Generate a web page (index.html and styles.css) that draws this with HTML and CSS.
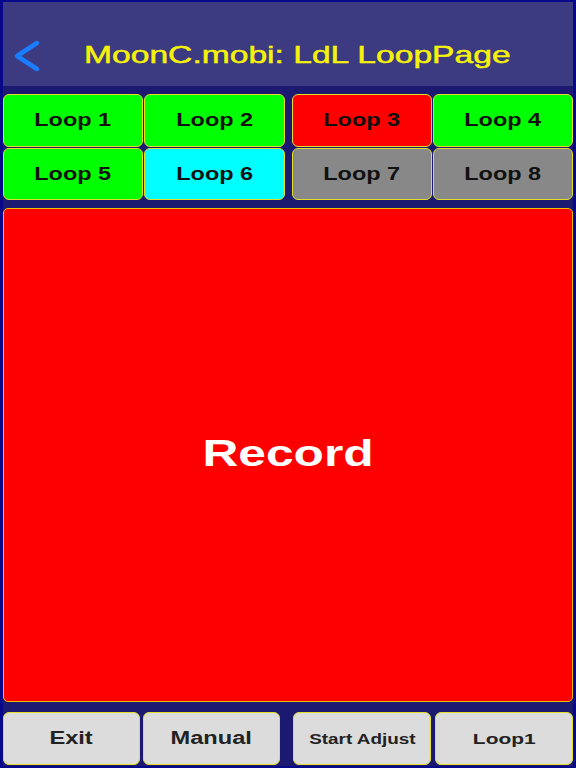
FILE: index.html
```html
<!DOCTYPE html>
<html>
<head>
<meta charset="utf-8">
<link rel="stylesheet" href="styles.css">
</head>
<body>
<div class="app">
  <header class="header">
    <div class="back">
      <svg width="30" height="34" viewBox="0 0 30 34"><path d="M24 4 L4 17 L24 30" fill="none" stroke="#1a7dff" stroke-width="4.5" stroke-linecap="round" stroke-linejoin="round"/></svg>
    </div>
    <div class="title"><span class="stretch">MoonC.mobi: LdL LoopPage</span></div>
  </header>
  <div class="loops">
    <div class="group">
      <div class="btn green"><span class="stretch">Loop 1</span></div>
      <div class="btn green"><span class="stretch">Loop 2</span></div>
      <div class="btn green"><span class="stretch">Loop 5</span></div>
      <div class="btn cyan"><span class="stretch">Loop 6</span></div>
    </div>
    <div class="group">
      <div class="btn red"><span class="stretch">Loop 3</span></div>
      <div class="btn green"><span class="stretch">Loop 4</span></div>
      <div class="btn gray"><span class="stretch">Loop 7</span></div>
      <div class="btn gray"><span class="stretch">Loop 8</span></div>
    </div>
  </div>
  <div class="record"><span class="stretch rec">Record</span></div>
  <div class="bottom">
    <div class="bgroup left">
      <div class="bbtn"><span class="stretch">Exit</span></div>
      <div class="bbtn"><span class="stretch">Manual</span></div>
    </div>
    <div class="bgroup right">
      <div class="bbtn small"><span class="stretch">Start Adjust</span></div>
      <div class="bbtn mid"><span class="stretch">Loop1</span></div>
    </div>
  </div>
</div>
</body>
</html>
```
FILE: styles.css
```css
html, body {
  margin: 0;
  padding: 0;
}
body {
  width: 576px;
  height: 768px;
  background: #08088a;
  font-family: "Liberation Sans", Arial, sans-serif;
  overflow: hidden;
}
.app {
  margin: 2px 3px;
  height: 764px;
  background: #1c1a70;
  display: flex;
  flex-direction: column;
}
.header {
  height: 84px;
  box-sizing: border-box;
  padding-top: 18px;
  background: #3c3a80;
  display: flex;
  align-items: center;
}
.back {
  width: 52px;
  padding-left: 10px;
  box-sizing: border-box;
  display: flex;
  align-items: center;
  margin-top: 5px;
}
.back svg {
  display: block;
}
.title {
  flex: 1;
  text-align: center;
  padding-right: 33px;
  color: #f6f20a;
  font-size: 24px;
  -webkit-text-stroke: 0.5px #f6f20a;
  margin-top: 4px;
}
.stretch {
  display: inline-block;
  transform: scaleX(1.33);
  white-space: nowrap;
}
.title .stretch {
  transform: scaleX(1.4);
}
.loops {
  margin-top: 8px;
  display: flex;
  gap: 7px;
}
.group {
  flex: 1;
  display: grid;
  grid-template-columns: 1fr 1fr;
  grid-template-rows: 53px 52px;
  gap: 1px;
}
.btn {
  border: 1.5px solid #e2de2a;
  border-radius: 6px;
  display: flex;
  align-items: center;
  justify-content: center;
  font-weight: bold;
  font-size: 17.5px;
  color: #111;
}
.btn .stretch {
  transform: scaleX(1.34);
}
.green { background: #00ff00; }
.red { background: #ff0000; }
.cyan { background: #00ffff; }
.gray { background: #888888; }
.record {
  margin-top: 8px;
  flex: 1;
  background: #ff0000;
  border: 1px solid #f0c000;
  border-radius: 5px;
  display: flex;
  align-items: center;
  justify-content: center;
}
.rec {
  color: #ffffff;
  font-weight: bold;
  font-size: 36px;
  transform: scaleX(1.38);
  margin-top: -2px;
}
.bottom {
  margin-top: 10px;
  margin-bottom: 1px;
  height: 53px;
  display: flex;
  gap: 13px;
}
.bgroup {
  display: flex;
}
.bgroup.left {
  flex: 0 0 277px;
  gap: 3px;
}
.bgroup.right {
  flex: 0 0 280px;
  gap: 4px;
}
.bbtn {
  flex: 1;
  background: #dcdcdc;
  border: 1.5px solid #e2de2a;
  border-radius: 6px;
  display: flex;
  align-items: center;
  justify-content: center;
  font-weight: bold;
  font-size: 17.5px;
  color: #222;
}
.bbtn .stretch {
  transform: scaleX(1.35);
}
.bbtn.small {
  font-size: 14px;
}
.bbtn.mid {
  font-size: 15.5px;
}
```
